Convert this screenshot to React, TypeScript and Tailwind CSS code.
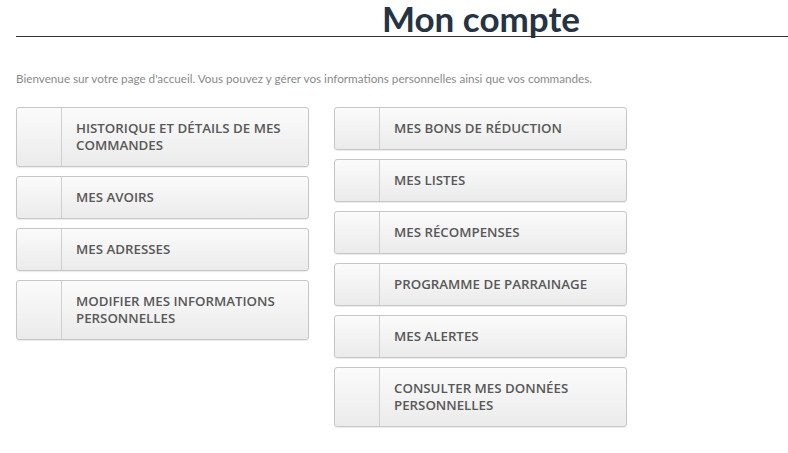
import React from "react";

const left = [
  "HISTORIQUE ET DÉTAILS DE MES COMMANDES",
  "MES AVOIRS",
  "MES ADRESSES",
  "MODIFIER MES INFORMATIONS PERSONNELLES",
];
const right = [
  "MES BONS DE RÉDUCTION",
  "MES LISTES",
  "MES RÉCOMPENSES",
  "PROGRAMME DE PARRAINAGE",
  "MES ALERTES",
  "CONSULTER MES DONNÉES PERSONNELLES",
];

function Btn({ label }: { label: string }) {
  return (
    <a className="flex w-[293px] rounded-[3px] border border-[#c6c6c6] bg-gradient-to-b from-[#fbfbfb] to-[#ebebeb] shadow-[0_1px_1px_rgba(0,0,0,0.08)]">
      <span className="w-[45px] shrink-0 border-r border-[#cfcfcf]" />
      <span className="py-[12px] pl-[14px] pr-[12px] text-[13.3px] font-semibold leading-[17px] text-[#585858] [font-family:'Open_Sans',sans-serif]">
        {label}
      </span>
    </a>
  );
}

export default function App() {
  return (
    <div className="min-h-[453px] w-[788px] overflow-hidden bg-white">
      <div className="ml-[16px] w-[930px]">
        <div className="border-b border-[#333] text-center">
          <h1 className="h-[36px] text-[35px] font-bold leading-[36px] text-[#253342] [font-family:'Lato',sans-serif]">
            Mon compte
          </h1>
        </div>
      </div>
      <p className="ml-[16px] mt-[34px] text-[11.7px] leading-[14px] text-[#8a8a8a] [font-family:'Lato',sans-serif]">
        Bienvenue sur votre page d'accueil. Vous pouvez y gérer vos informations personnelles ainsi que vos commandes.
      </p>
      <div className="ml-[16px] mt-[22px] flex gap-[25px]">
        <div className="flex flex-col gap-[9px]">
          {left.map((l) => (
            <Btn key={l} label={l} />
          ))}
        </div>
        <div className="flex flex-col gap-[9px]">
          {right.map((l) => (
            <Btn key={l} label={l} />
          ))}
        </div>
      </div>
    </div>
  );
}
